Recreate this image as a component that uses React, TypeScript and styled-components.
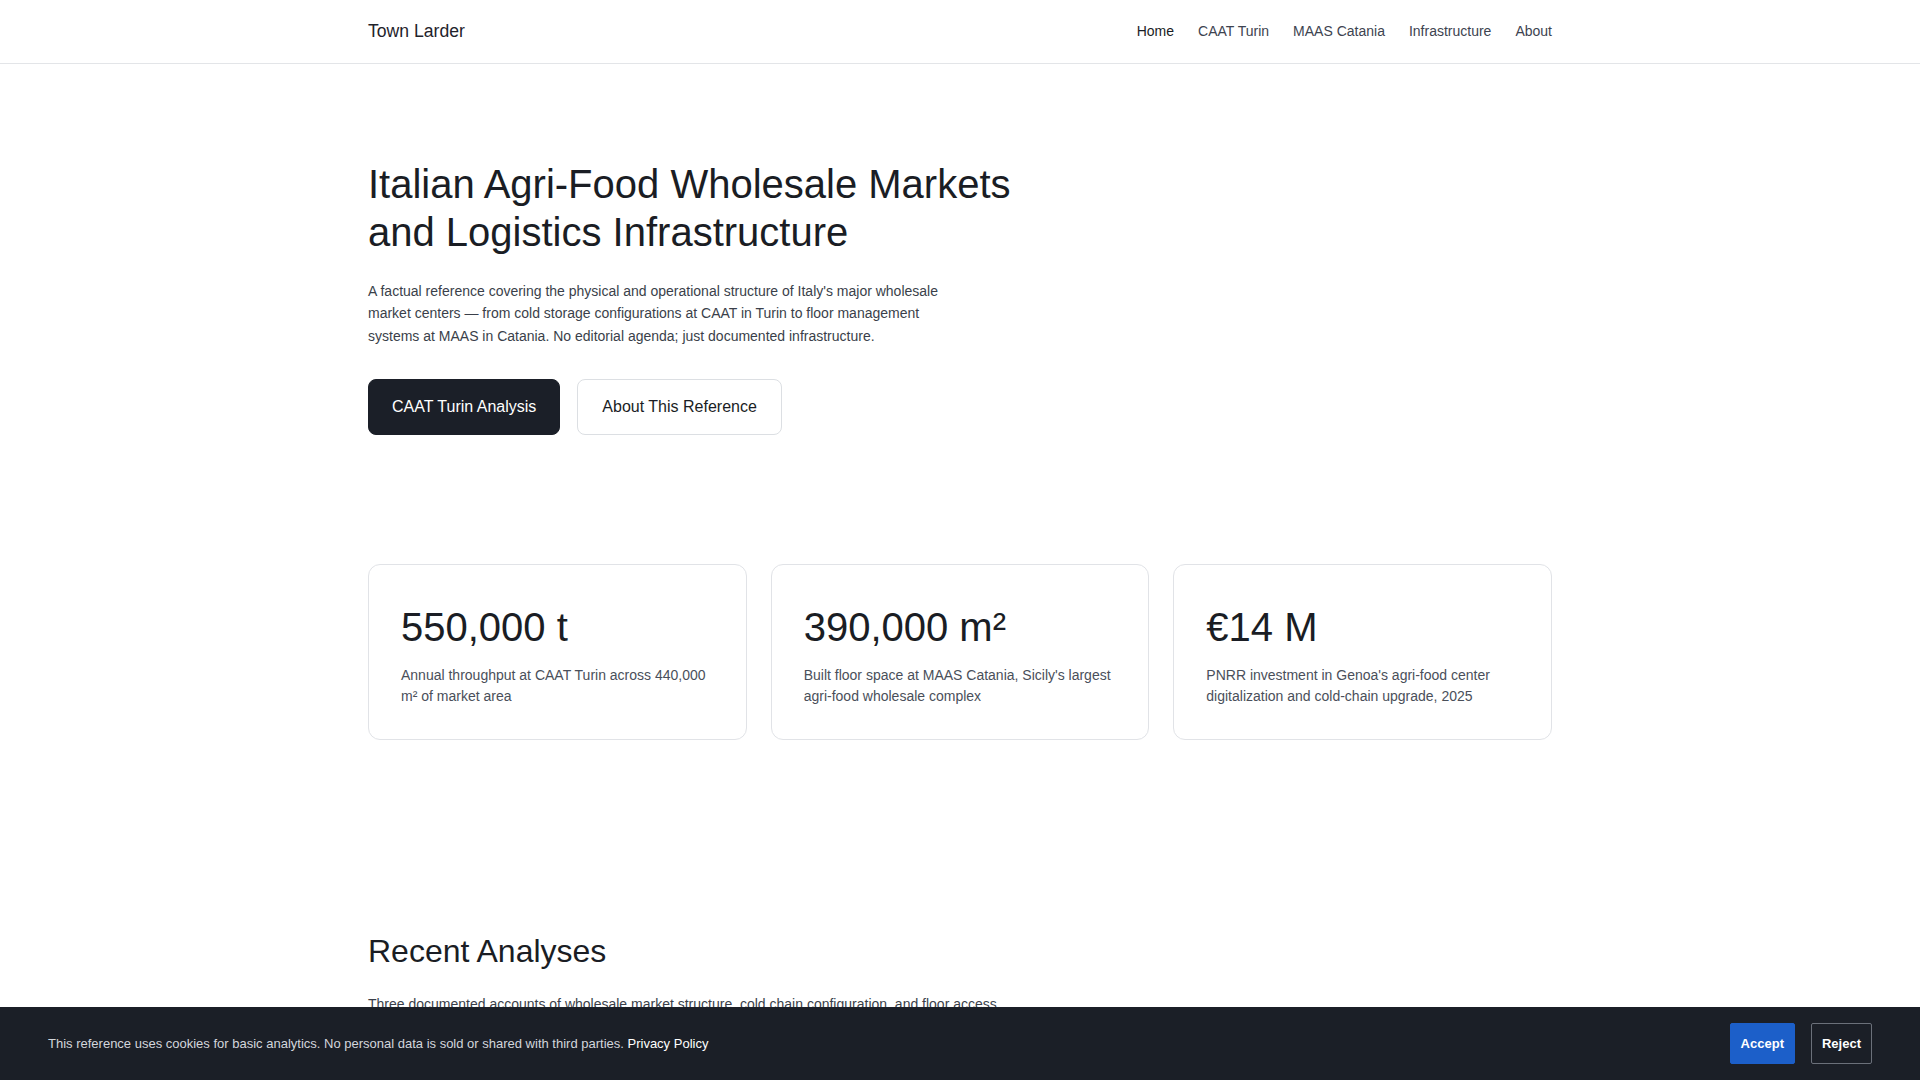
import React from "react";
import styled, { createGlobalStyle } from "styled-components";

const GlobalStyle = createGlobalStyle`
  *, *::before, *::after { box-sizing: border-box; }
  html, body { margin: 0; padding: 0; }
  body {
    background: #ffffff;
    color: #1a1d24;
    font-family: "Liberation Sans", Arial, Helvetica, sans-serif;
    line-height: 1.5;
    -webkit-font-smoothing: antialiased;
  }
  a { color: inherit; text-decoration: none; }
`;

const Container = styled.div`
  max-width: 1184px;
  margin: 0 auto;
`;

/* ---------- header ---------- */

const Header = styled.header`
  border-bottom: 1px solid #e3e5e8;
  background: #ffffff;
`;

const HeaderInner = styled(Container)`
  height: 63px;
  display: flex;
  align-items: center;
  justify-content: space-between;
`;

const Brand = styled.a`
  font-size: 17.6px;
  color: #1f232b;
`;

const Nav = styled.nav`
  display: flex;
  gap: 24px;
`;

const NavLink = styled.a<{ $active?: boolean }>`
  font-size: 14px;
  color: ${(p) => (p.$active ? "#1a1d24" : "#3d4350")};
`;

/* ---------- hero ---------- */

const Hero = styled.section`
  padding: 96px 0 64px;
`;

const Title = styled.h1`
  margin: 0;
  max-width: 700px;
  font-size: 40px;
  font-weight: 400;
  line-height: 48px;
  color: #1a1d24;
`;

const Lead = styled.p`
  margin: 24px 0 0;
  max-width: 600px;
  font-size: 14px;
  line-height: 22.4px;
  color: #3a3f4a;
`;

const Actions = styled.div`
  display: flex;
  gap: 17px;
  margin-top: 32px;
`;

const Button = styled.a<{ $primary?: boolean }>`
  display: inline-flex;
  align-items: center;
  padding: 15px ${(p) => (p.$primary ? "23px" : "24px")};
  font-size: 16px;
  line-height: 24px;
  border-radius: 8px;
  border: 1px solid ${(p) => (p.$primary ? "#1b1f28" : "#dcdfe3")};
  background: ${(p) => (p.$primary ? "#1b1f28" : "#ffffff")};
  color: ${(p) => (p.$primary ? "#ffffff" : "#1a1d24")};
`;

/* ---------- stats ---------- */

const Stats = styled.section`
  padding: 65px 0 96px;
`;

const StatGrid = styled.div`
  display: grid;
  grid-template-columns: repeat(3, 1fr);
  gap: 24px;
`;

const StatCard = styled.div`
  border: 1px solid #e1e3e7;
  border-radius: 12px;
  padding: 32px;
`;

const StatValue = styled.div`
  font-size: 40px;
  line-height: 60px;
  color: #1a1d24;
`;

const StatText = styled.p`
  margin: 8px 0 0;
  font-size: 14px;
  line-height: 21px;
  color: #4a4f5a;
`;

/* ---------- recent ---------- */

const Recent = styled.section`
  padding: 96px 0 160px;
`;

const SectionTitle = styled.h2`
  margin: 0;
  font-size: 32px;
  font-weight: 400;
  line-height: 38.4px;
  color: #1a1d24;
`;

const SectionLead = styled.p`
  margin: 22px 0 0;
  max-width: 640px;
  font-size: 14px;
  line-height: 22.4px;
  color: #3a3f4a;
`;

const ArticleList = styled.div`
  display: grid;
  grid-template-columns: repeat(3, 1fr);
  gap: 24px;
  margin-top: 40px;
`;

const Article = styled.article`
  border: 1px solid #e1e3e7;
  border-radius: 12px;
  padding: 28px 32px;
`;

const ArticleTitle = styled.h3`
  margin: 0 0 8px;
  font-size: 18px;
  font-weight: 400;
`;

const ArticleText = styled.p`
  margin: 0;
  font-size: 14px;
  line-height: 21px;
  color: #4a4f5a;
`;

/* ---------- cookie bar ---------- */

const CookieBar = styled.div`
  position: fixed;
  left: 0;
  right: 0;
  bottom: 0;
  height: 73px;
  background: #1b1f27;
  display: flex;
  align-items: center;
  justify-content: space-between;
  padding: 0 48px;
`;

const CookieText = styled.p`
  margin: 0;
  font-size: 13px;
  color: #d3d6dc;
`;

const CookieLink = styled.a`
  color: #ffffff;
`;

const CookieActions = styled.div`
  display: flex;
  gap: 16px;
`;

const CookieButton = styled.button<{ $accept?: boolean }>`
  font-family: "Liberation Sans", Arial, sans-serif;
  font-size: 13px;
  font-weight: 700;
  line-height: 15px;
  padding: 12px 10px;
  border-radius: 2px;
  cursor: pointer;
  color: #ffffff;
  border: 1px solid ${(p) => (p.$accept ? "#1c5fc9" : "#6b707a")};
  background: ${(p) => (p.$accept ? "#1c5fc9" : "transparent")};
`;

const stats = [
  {
    value: "550,000 t",
    text: "Annual throughput at CAAT Turin across 440,000 m² of market area",
  },
  {
    value: "390,000 m²",
    text: "Built floor space at MAAS Catania, Sicily's largest agri-food wholesale complex",
  },
  {
    value: "€14 M",
    text: "PNRR investment in Genoa's agri-food center digitalization and cold-chain upgrade, 2025",
  },
];

const articles = [
  {
    title: "CAAT Turin: Cold Storage Layout",
    text: "Refrigerated cell capacity, loading bays and temperature zoning across the Grugliasco site.",
  },
  {
    title: "MAAS Catania: Floor Management",
    text: "Stall allocation, access windows and operator registration at the Sicilian complex.",
  },
  {
    title: "Genoa: Cold-Chain Upgrade",
    text: "Scope and timeline of the PNRR-funded digitalization works announced in 2025.",
  },
];

export default function App() {
  return (
    <>
      <GlobalStyle />
      <Header>
        <HeaderInner>
          <Brand href="#">Town Larder</Brand>
          <Nav>
            <NavLink href="#" $active>Home</NavLink>
            <NavLink href="#">CAAT Turin</NavLink>
            <NavLink href="#">MAAS Catania</NavLink>
            <NavLink href="#">Infrastructure</NavLink>
            <NavLink href="#">About</NavLink>
          </Nav>
        </HeaderInner>
      </Header>

      <main>
        <Hero>
          <Container>
            <Title>Italian Agri-Food Wholesale Markets and Logistics Infrastructure</Title>
            <Lead>
              A factual reference covering the physical and operational structure of Italy's major
              wholesale market centers — from cold storage configurations at CAAT in Turin to floor
              management systems at MAAS in Catania. No editorial agenda; just documented
              infrastructure.
            </Lead>
            <Actions>
              <Button href="#" $primary>CAAT Turin Analysis</Button>
              <Button href="#">About This Reference</Button>
            </Actions>
          </Container>
        </Hero>

        <Stats>
          <Container>
            <StatGrid>
              {stats.map((s) => (
                <StatCard key={s.value}>
                  <StatValue>{s.value}</StatValue>
                  <StatText>{s.text}</StatText>
                </StatCard>
              ))}
            </StatGrid>
          </Container>
        </Stats>

        <Recent>
          <Container>
            <SectionTitle>Recent Analyses</SectionTitle>
            <SectionLead>
              Three documented accounts of wholesale market structure, cold chain configuration, and
              floor access protocols at Italy's principal agri-food hubs.
            </SectionLead>
            <ArticleList>
              {articles.map((a) => (
                <Article key={a.title}>
                  <ArticleTitle>{a.title}</ArticleTitle>
                  <ArticleText>{a.text}</ArticleText>
                </Article>
              ))}
            </ArticleList>
          </Container>
        </Recent>
      </main>

      <CookieBar>
        <CookieText>
          This reference uses cookies for basic analytics. No personal data is sold or shared with
          third parties. <CookieLink href="#">Privacy Policy</CookieLink>
        </CookieText>
        <CookieActions>
          <CookieButton $accept>Accept</CookieButton>
          <CookieButton>Reject</CookieButton>
        </CookieActions>
      </CookieBar>
    </>
  );
}
